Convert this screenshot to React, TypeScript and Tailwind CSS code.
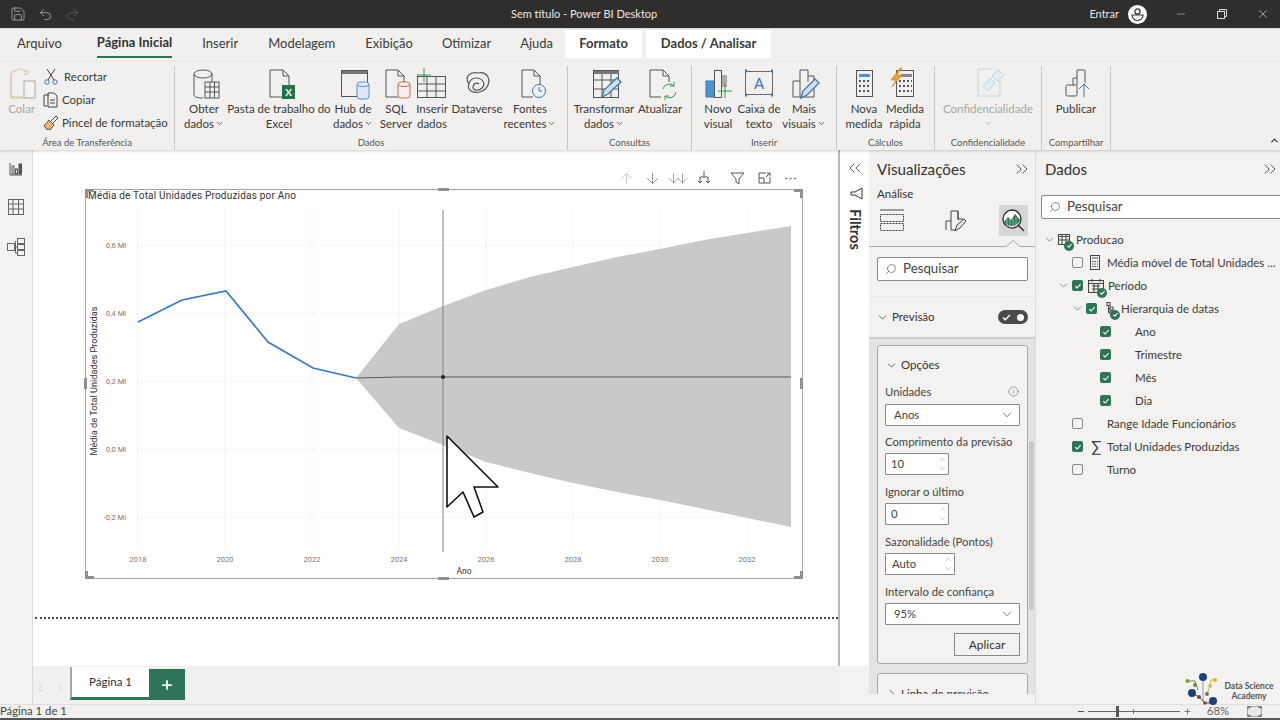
import type { ReactNode } from "react";
import {
  ArrowDown, ArrowUp, ChevronDown, ChevronLeft, ChevronRight, ChevronUp, ChevronsLeft, ChevronsRight,
  Info, Minus, MoreHorizontal, Plus, Redo2, Save, Search, Undo2, X,
} from "lucide-react";

/* ── Ribbon ──────────────────────────────────────────────── */
const Ico = ({ cx, children }: { cx: number; children: ReactNode }) => (
  <svg width={40} height={34} viewBox={`${cx - 20} 66 40 34`} fill="none" stroke="#555" strokeWidth={1} className="shrink-0">
    {children}
  </svg>
);

const RibbonBtn = ({ w, cx, top, bottom, caret, muted, children }: {
  w: number; cx: number; top: string; bottom?: string; caret?: boolean; muted?: boolean; children: ReactNode;
}) => (
  <div className={`flex flex-col items-center shrink-0 leading-[15px] whitespace-nowrap ${muted ? "text-[#a6a5a3]" : "text-[#3b3a39]"}`} style={{ width: w }}>
    <Ico cx={cx}>{children}</Ico>
    <span className="mt-[1px]">{top}</span>
    {(bottom || caret) && (
      <span className="flex items-center gap-[1px] h-[15px]">
        {bottom}
        {caret && <ChevronDown size={9} strokeWidth={2} />}
      </span>
    )}
  </div>
);

const Group = ({ w, label, children }: { w: number; label: string; children: ReactNode }) => (
  <div className="flex flex-col shrink-0 h-[84px] border-r border-[#c8c6c4]" style={{ width: w }}>
    <div className="flex h-[70px]">{children}</div>
    <div className="text-center text-[9.5px] leading-[14px] text-[#555]">{label}</div>
  </div>
);

function Ribbon() {
  return (
    <div className="flex items-start h-[88px] shrink-0 pt-[4px] bg-[#f1f0ee] text-[11.5px] relative z-10 shadow-[0_1px_3px_rgba(0,0,0,0.2)]">
      {/* Área de Transferência */}
      <Group w={175} label="Área de Transferência">
        <div className="flex flex-col items-center w-[43px] text-[#a6a5a3] leading-[15px]">
          <svg width={30} height={34} viewBox="7 66 30 34" fill="none" strokeWidth={1} className="shrink-0">
            <path d="M24 74h4V71h-4l-2-2h-4l-2 2h-4v3h-1v24h12" stroke="#d9c3a2" />
            <path d="M11 74v23h14" stroke="#d9c3a2" />
            <rect x="24" y="81" width="11" height="17" stroke="#a8a8a8" fill="#f4f3f1" />
          </svg>
          <span className="mt-[1px]">Colar</span>
        </div>
        <div className="flex flex-col text-[#3b3a39] leading-[23px] whitespace-nowrap -mt-[1px]">
          <div className="flex items-center gap-[6px] ml-[1px]">
            <svg width={14} height={18} viewBox="0 0 14 18" fill="none" stroke="#444"><path d="M3 1l7 11M11 1L4 12" /><circle cx="3" cy="14" r="2.2" stroke="#3f76b5" /><circle cx="11" cy="14" r="2.2" stroke="#3f76b5" /></svg>
            Recortar
          </div>
          <div className="flex items-center gap-[3px]">
            <svg width={16} height={16} viewBox="0 0 16 16" fill="none" stroke="#444"><path d="M6 3H1v11h3" /><path d="M5 1h6l3 3v11H5z" /><path d="M7 8h5M7 11h5" /></svg>
            Copiar
          </div>
          <div className="flex items-center gap-[2px]">
            <svg width={17} height={17} viewBox="0 0 17 17" fill="none"><path d="M1 12l5-6 5 5-4 5-2-1-1 1-1-2z" fill="#e6b873" stroke="#555" /><path d="M8 7l5-5 2 2-5 5" stroke="#444" /></svg>
            Pincel de formatação
          </div>
        </div>
      </Group>

      {/* Dados */}
      <Group w={393} label="Dados">
        <RibbonBtn w={58} cx={205} top="Obter" bottom="dados" caret>
          <ellipse cx="204" cy="74" rx="9" ry="4" />
          <path d="M195 74v21c0 2 4 3 9 3M213 74v8" />
          <rect x="206" y="82" width="14" height="16" fill="#f1f0ee" />
          <path d="M206 87h14M206 92h14M211 82v16M215.500 82v16" />
        </RibbonBtn>
        <RibbonBtn w={92} cx={280} top="Pasta de trabalho do" bottom="Excel">
          <path d="M290 85V76l-6-6h-13v27h12M284 70v6h6" />
          <rect x="283" y="85" width="13" height="14" fill="#217346" stroke="none" />
          <text x="289.500" y="96" fontSize="10" fontWeight="700" textAnchor="middle" fill="#fff" stroke="none">X</text>
        </RibbonBtn>
        <RibbonBtn w={56} cx={354} top="Hub de" bottom="dados" caret>
          <rect x="342.500" y="70.500" width="26" height="26" />
          <rect x="343" y="71" width="25" height="3" fill="#777" stroke="none" />
          <rect x="358" y="82" width="12" height="17" rx="3" fill="#dfe9f3" stroke="#5a93c9" />
          <path d="M358 85c2 2 10 2 12 0" stroke="#5a93c9" />
        </RibbonBtn>
        <RibbonBtn w={30} cx={397} top="SQL" bottom="Server">
          <path d="M405 82V76l-6-6h-12v27h12M399 70v6h6" />
          <rect x="399" y="82" width="12" height="16" rx="3" fill="#f1f0ee" stroke="#c8714a" />
          <path d="M399 85c2 2 10 2 12 0" stroke="#c8714a" />
        </RibbonBtn>
        <RibbonBtn w={42} cx={433} top="Inserir" bottom="dados">
          <rect x="418.500" y="76.500" width="28" height="21" />
          <path d="M418 84h29M418 91h29M428 77v21M437 77v21" />
          <path d="M425 68v14M418 75h14" stroke="#2f9e4f" />
        </RibbonBtn>
        <RibbonBtn w={48} cx={478} top="Dataverse">
          <path d="M470 84c-5-7 1-13 9-11 8-2 13 5 10 12-3 7-12 9-17 6-5-3-2-13 5-13s10 6 6 10-9 2-9-1 3-5 6-3" strokeWidth={1.2} />
        </RibbonBtn>
        <RibbonBtn w={58} cx={531} top="Fontes" bottom="recentes" caret>
          <path d="M541 84V76l-6-6h-12v27h11M535 70v6h6" />
          <circle cx="540" cy="91" r="6.500" stroke="#3f76b5" fill="#f1f0ee" />
          <path d="M540 87v4h3" stroke="#3f76b5" />
        </RibbonBtn>
      </Group>

      {/* Consultas */}
      <Group w={124} label="Consultas">
        <RibbonBtn w={72} cx={605} top="Transformar" bottom="dados" caret>
          <rect x="594.500" y="70.500" width="25" height="27" />
          <rect x="595" y="71" width="25" height="3" fill="#777" stroke="none" />
          <path d="M594 80h26M594 89h26M603 74v24M612 74v24" />
          <path d="M603 97l2-7 13-12 4 4-13 12z" fill="#cfe0f1" stroke="#3f76b5" strokeWidth={1.3} />
        </RibbonBtn>
        <RibbonBtn w={40} cx={661} top="Atualizar">
          <path d="M670 82V76l-6-6h-13v27h11M664 70v6h6" />
          <path d="M664 89a6.500 6.500 0 0 1 11-3M677 92a6.500 6.500 0 0 1-11 4M675 82v4h-4M666 100v-4h4" stroke="#2f9e4f" />
        </RibbonBtn>
      </Group>

      {/* Inserir */}
      <Group w={145} label="Inserir">
        <RibbonBtn w={52} cx={719} top="Novo" bottom="visual">
          <rect x="707" y="81" width="10" height="16" fill="#4f92d0" stroke="#3f76b5" />
          <rect x="715.500" y="70.500" width="7" height="27" fill="#f1f0ee" />
          <rect x="723" y="75" width="5" height="12" fill="#aaa" stroke="none" />
          <path d="M726 84v14M719 91h14" stroke="#2f9e4f" />
        </RibbonBtn>
        <RibbonBtn w={30} cx={760} top="Caixa de" bottom="texto">
          <rect x="746.500" y="71.500" width="27" height="23" stroke="#6a6a6a" />
          <path d="M746 71h2M772 71h2M746 95h2M772 95h2" stroke="#3f76b5" strokeWidth={3} />
          <text x="760" y="89" fontSize="15" textAnchor="middle" fill="#3f76b5" stroke="none">A</text>
        </RibbonBtn>
        <RibbonBtn w={60} cx={805} top="Mais" bottom="visuais" caret>
          <path d="M794 97V81h7V70h8v6h6v21z" />
          <path d="M801 81v16M809 76v6" />
          <path d="M802 98l2-7 12-12 4 4-12 12z" fill="#cfe0f1" stroke="#3f76b5" strokeWidth={1.3} />
        </RibbonBtn>
      </Group>

      {/* Cálculos */}
      <Group w={98} label="Cálculos">
        <RibbonBtn w={54} cx={865} top="Nova" bottom="medida">
          <rect x="857.500" y="70.500" width="16" height="26" />
          <rect x="860" y="74" width="11" height="3" fill="#4f92d0" stroke="none" />
          <path d="M860 81h11M860 86h11M860 91h11" strokeDasharray="2 2" strokeWidth={2} />
        </RibbonBtn>
        <RibbonBtn w={28} cx={906} top="Medida" bottom="rápida">
          <rect x="897.500" y="70.500" width="17" height="26" />
          <rect x="902" y="74" width="11" height="3" fill="#888" stroke="none" />
          <path d="M900 81h13M900 86h13M900 91h13" strokeDasharray="2 2" strokeWidth={2} />
          <path d="M901 68l-9 12h5l-4 7 10-12h-5l5-7z" fill="#e8a33d" stroke="#b87d24" strokeWidth={0.6} />
        </RibbonBtn>
      </Group>

      {/* Confidencialidade */}
      <Group w={107} label="Confidencialidade">
        <RibbonBtn w={106} cx={988} top="Confidencialidade" caret muted>
          <path d="M1000 81v15h-22V69h14" stroke="#bcd6e6" />
          <path d="M983 86l7-8 5 5-7 8zM992 76l6-6 6 5-6 6z" stroke="#bcd6e6" fill="#e3edf3" />
        </RibbonBtn>
      </Group>

      {/* Compartilhar */}
      <Group w={69} label="Compartilhar">
        <RibbonBtn w={68} cx={1077} top="Publicar">
          <rect x="1067" y="85" width="11" height="11" rx="1.500" />
          <path d="M1074 85v-7h4v-8h7c1 0 1 1 1 1v12M1078 78v7" />
          <path d="M1085 97V84M1080 89l5-5 5 5" stroke="#3f76b5" />
        </RibbonBtn>
      </Group>

      <ChevronUp size={11} strokeWidth={2.5} className="absolute right-[0px] bottom-[4px] text-[#333]" />
    </div>
  );
}

/* ── Chart ───────────────────────────────────────────────── */
const XS = [2018, 2020, 2022, 2024, 2026, 2028, 2030, 2032];
const YS = [["0,6 Mi", 245], ["0,4 Mi", 313], ["0,2 Mi", 381], ["0,0 Mi", 449], ["-0,2 Mi", 517]] as const;

function Chart() {
  return (
    <svg width={722} height={394} viewBox="83 187 722 394" className="block font-['Roboto',sans-serif]">
      <rect x="85.500" y="189.500" width="717" height="389" fill="#fff" stroke="#a3a3a3" />
      <text x="88" y="199" fontSize="10" letterSpacing="0.2" fill="#333">Média de Total Unidades Produzidas por Ano</text>
      {XS.map((y, i) => (
        <g key={y}>
          <line x1={138 + i * 87} x2={138 + i * 87} y1="210" y2="548" stroke="#dcdcdc" strokeDasharray="1 3" />
          <text x={138 + i * 87} y="562" fontSize="7.500" textAnchor="middle" fill="#777">{y}</text>
        </g>
      ))}
      {YS.map(([t, y]) => (
        <g key={t}>
          <line x1="137" x2="792" y1={y} y2={y} stroke="#dcdcdc" strokeDasharray="1 3" />
          <text x="126" y={y + 3} fontSize="7.500" textAnchor="end" fill="#777">{t}</text>
        </g>
      ))}
      <text x="0" y="0" fontSize="9.200" textAnchor="middle" fill="#333" transform="translate(97 381) rotate(-90)">Média de Total Unidades Produzidas</text>
      <text x="464" y="574" fontSize="8.500" textAnchor="middle" fill="#333">Ano</text>

      {/* forecast band */}
      <path
        d="M356 378L399 324L443 306L486 290L530 277L573 267L617 257L660 249L704 240L747 233L791 226V527L747 518L704 509L660 500L617 492L573 483L530 473L486 462L443 445L399 428Z"
        fill="#c9c9c9"
      />
      <path d="M356 378L399 377H791" fill="none" stroke="#3a3a3a" strokeWidth={0.8} />
      <path d="M138 322L182 300L226 291L268 342L313 368L356 378" fill="none" stroke="#3a78c2" strokeWidth={1.7} />
      <line x1="443" x2="443" y1="210" y2="552" stroke="#777" strokeWidth={0.9} />
      <circle cx="443" cy="377" r="2" fill="#222" />

      {/* cursor */}
      <path d="M447 436L498 487H474L483 512L474 517L463 492L447 507Z" fill="#fff" stroke="#111" strokeWidth={1.6} strokeLinejoin="round" />

      {/* selection handles */}
      <g fill="#8f8f8f">
        <path d="M85 189h9v3h-6v6h-3z" />
        <path d="M794 189h9v9h-3v-6h-6z" />
        <path d="M85 571h3v5h6v3h-9z" />
        <path d="M800 571h3v8h-9v-3h6z" />
        <rect x="438" y="188" width="11" height="3" />
        <rect x="438" y="577" width="11" height="3" />
        <rect x="84" y="378" width="3" height="11" />
        <rect x="800" y="378" width="3" height="11" />
      </g>
    </svg>
  );
}

/* ── Data pane tree ──────────────────────────────────────── */
const Check = ({ on }: { on?: boolean }) =>
  on ? (
    <span className="flex items-center justify-center w-[11px] h-[11px] rounded-[2px] bg-[#2e7558] shrink-0">
      <svg width={8} height={8} viewBox="0 0 8 8" fill="none" stroke="#fff" strokeWidth={1.1}><path d="M1.300 4.200l1.800 1.800 3.500-3.800" /></svg>
    </span>
  ) : (
    <span className="w-[11px] h-[11px] rounded-[2px] border border-[#8a8886] bg-[#f4f3f1] shrink-0" />
  );

const Badge = ({ className }: { className: string }) => (
  <span className={`absolute flex items-center justify-center w-[10px] h-[10px] rounded-full bg-[#2e7558] ${className}`}>
    <svg width={7} height={7} viewBox="0 0 8 8" fill="none" stroke="#fff" strokeWidth={1.2}><path d="M1.500 4.200l1.700 1.700 3.300-3.600" /></svg>
  </span>
);

const Caret = () => <ChevronDown size={13} strokeWidth={1} className="text-[#444] shrink-0" />;

const Row = ({ pl, children }: { pl: number; children: ReactNode }) => (
  <div className="flex items-center h-[23px] whitespace-nowrap" style={{ paddingLeft: pl }}>{children}</div>
);

function Tree() {
  return (
    <div className="flex flex-col -ml-[9px] mt-[9px] text-[11.5px] text-[#3b3a39]">
      <Row pl={7}>
        <Caret />
        <span className="relative ml-[2px] w-[12px] h-[12px] shrink-0">
          <svg width={12} height={11} viewBox="0 0 12 11" fill="none" stroke="#444"><rect x=".5" y=".5" width="11" height="10" /><path d="M0 2.500h12M0 6h12M4 0v11M8 0v11" /></svg>
          <Badge className="left-[6px] top-[7px]" />
        </span>
        <span className="ml-[6px]">Producao</span>
      </Row>
      <Row pl={36}>
        <Check />
        <svg width={10} height={15} viewBox="0 0 10 15" fill="none" stroke="#444" className="ml-[7px] shrink-0"><rect x=".5" y=".5" width="9" height="14" /><path d="M2 3h6" /><path d="M2 6.500h6M2 9h6M2 11.500h6" strokeDasharray="1.500 1" /></svg>
        <span className="ml-[7px]">Média móvel de Total Unidades ...</span>
      </Row>
      <Row pl={21}>
        <Caret />
        <span className="ml-[2px]"><Check on /></span>
        <span className="relative ml-[5px] w-[16px] h-[14px] shrink-0">
          <svg width={16} height={14} viewBox="0 0 16 14" fill="none" stroke="#444"><rect x=".5" y="1.500" width="15" height="12" /><path d="M0 4.500h16M4 0v3M12 0v3M4 7h8M4 10h8M6 5v8M10 5v8" /></svg>
          <Badge className="left-[9px] top-[9px]" />
        </span>
        <span className="ml-[4px]">Período</span>
      </Row>
      <Row pl={35}>
        <Caret />
        <span className="ml-[2px]"><Check on /></span>
        <span className="relative ml-[9px] w-[15px] h-[14px] shrink-0">
          <svg width={11} height={12} viewBox="0 0 11 12" fill="none" stroke="#444"><rect x="1" y=".5" width="3" height="3" /><rect x="4" y="5" width="3" height="3" /><rect x="4" y="9" width="3" height="2.500" /><path d="M2.500 3.500V10.500H4M2.500 6.500H4" /></svg>
          <Badge className="left-[4px] top-[8px]" />
        </span>
        <span>Hierarquia de datas</span>
      </Row>
      {["Ano", "Trimestre", "Mês", "Dia"].map((t) => (
        <Row key={t} pl={64}>
          <Check on />
          <span className="ml-[24px]">{t}</span>
        </Row>
      ))}
      <Row pl={36}>
        <Check />
        <span className="ml-[24px]">Range Idade Funcionários</span>
      </Row>
      <Row pl={36}>
        <Check on />
        <span className="ml-[8px] w-[10px] text-center text-[15px] leading-none">∑</span>
        <span className="ml-[6px]">Total Unidades Produzidas</span>
      </Row>
      <Row pl={36}>
        <Check />
        <span className="ml-[24px]">Turno</span>
      </Row>
    </div>
  );
}

/* ── Viz pane fields ─────────────────────────────────────── */
const Label = ({ children }: { children: ReactNode }) => (
  <div className="text-[11.3px] leading-[14px] text-[#444] whitespace-nowrap">{children}</div>
);

const Select = ({ value }: { value: string }) => (
  <div className="flex items-center justify-between h-[22px] mt-[4px] pl-[8px] pr-[5px] bg-white border border-[#8a8886] rounded-[1px] text-[11.3px] text-[#444]">
    {value}
    <ChevronDown size={14} strokeWidth={1.2} />
  </div>
);

const Spin = ({ value, w }: { value: string; w: string }) => (
  <div className={`flex items-center justify-between h-[22px] mt-[4px] pl-[5px] pr-[1px] bg-white border border-[#8a8886] rounded-[1px] text-[11.3px] text-[#444] ${w}`}>
    {value}
    <span className="flex flex-col items-center text-[#777]">
      <ChevronUp size={9} strokeWidth={1} />
      <ChevronDown size={9} strokeWidth={1} />
    </span>
  </div>
);

const SearchBox = ({ className }: { className: string }) => (
  <div className={`flex items-center gap-[6px] h-[24px] pl-[7px] pb-[1px] bg-white border border-[#8a8886] rounded-[2px] text-[13.3px] text-[#444] ${className}`}>
    <Search size={12} strokeWidth={1.2} className="-scale-x-100" />
    Pesquisar
  </div>
);

function VizPane() {
  return (
    <div className="flex flex-col w-[167px] shrink-0 bg-[#f3f2f0] border-r border-[#dcdbd9]">
      <div className="flex items-center justify-between h-[22px] mt-[8px] pl-[8px] pr-[3px]">
        <span className="text-[15.2px] text-[#333]">Visualizações</span>
        <ChevronsRight size={20} strokeWidth={1} className="text-[#333]" />
      </div>
      <div className="pl-[8px] mt-[5px] h-[18px] leading-[18px] text-[11.5px] text-[#333]">Análise</div>
      <div className="flex items-center justify-between pl-[10px] pr-[7px] h-[31px] mt-[2px]">
        <svg width={26} height={26} viewBox="0 0 26 26" fill="none" stroke="#444">
          <path d="M1 2h24" />
          <rect x="1.500" y="6.500" width="23" height="7" strokeDasharray="2 1" />
          <rect x="1.500" y="15.500" width="23" height="7" strokeDasharray="2 1" />
        </svg>
        <svg width={24} height={26} viewBox="0 0 24 26" fill="none" stroke="#444" className="ml-[8px]">
          <path d="M2 22V13h5V3h7v8h5" />
          <path d="M7 13v9h5M14 3v9" />
          <path d="M11 23l2-6 7-6 2 2-6 7z" fill="#e6e5e3" />
        </svg>
        <span className="flex items-center justify-center w-[29px] h-[31px] bg-[#d7d6d4]">
          <svg width={25} height={25} viewBox="0 0 25 25" fill="none">
            <circle cx="11" cy="11" r="9" fill="#fff" stroke="#333" strokeWidth={1.4} />
            <path d="M3 14l4-5 3 3 4-6 5 6a9 9 0 0 1-16 2z" fill="#2e7558" />
            <path d="M6 11v8M9 11v9M12 10v10M15 9v10" stroke="#fff" strokeWidth={0.5} />
            <path d="M17 17l6 6" stroke="#333" strokeWidth={1.6} />
          </svg>
        </span>
      </div>
      {/* tab rule with the notch under the active icon */}
      <svg height={7} width={166} viewBox="0 0 166 7" fill="none" stroke="#aaa" className="shrink-0 mt-[4px]">
        <path d="M0 6.500H137L144 .5L151 6.500H166" />
      </svg>
      <SearchBox className="mx-[8px] mt-[10px] w-[151px] shrink-0" />
      <div className="flex items-center justify-between h-[41px] shrink-0 mt-[15px] pl-[7px] pr-[7px] border-t border-[#e8e7e5]">
        <span className="flex items-center gap-[3px] text-[11.5px] text-[#333]">
          <ChevronDown size={13} strokeWidth={1.3} />
          Previsão
        </span>
        <span className="flex items-center justify-between w-[30px] h-[14px] px-[4px] rounded-full bg-[#4a4a48]">
          <svg width={9} height={7} viewBox="0 0 9 7" fill="none" stroke="#fff" strokeWidth={1.4}><path d="M1 3.500l2.200 2.200L8 1" /></svg>
          <span className="w-[7px] h-[7px] rounded-full bg-white" />
        </span>
      </div>
      {/* scrolling area */}
      <div className="relative h-[357px] shrink-0 overflow-hidden bg-[#e4e3e1] border-t-2 border-[#cfcecc] pl-[8px] pt-[6px]">
        <div className="flex flex-col w-[151px] h-[319px] bg-[#f3f2f0] border border-[#a9a8a6] rounded-[3px] px-[7px]">
          <div className="flex items-center gap-[3px] mt-[12px] text-[11.5px] text-[#333] h-[14px]">
            <ChevronDown size={13} strokeWidth={1.3} />
            Opções
          </div>
          <div className="flex items-center justify-between mt-[12px] h-[15px]">
            <Label>Unidades</Label>
            <Info size={11} strokeWidth={1} className="text-[#444] mr-[1px]" />
          </div>
          <div className="h-[1px]" />
          <Select value="Anos" />
          <div className="mt-[9px]"><Label>Comprimento da previsão</Label></div>
          <Spin value="10" w="w-[64px]" />
          <div className="mt-[10px]"><Label>Ignorar o último</Label></div>
          <Spin value="0" w="w-[64px]" />
          <div className="mt-[10px]"><Label>Sazonalidade (Pontos)</Label></div>
          <Spin value="Auto" w="w-[70px] pl-[6px]" />
          <div className="mt-[10px]"><Label>Intervalo de confiança</Label></div>
          <Select value="95%" />
          <div className="flex justify-end mt-[8px]">
            <span className="flex items-center justify-center w-[66px] h-[23px] bg-[#f3f2f0] border border-[#8a8886] text-[12px] text-[#333]">Aplicar</span>
          </div>
        </div>
        <div className="w-[151px] h-[40px] mt-[9px] bg-[#f3f2f0] border border-[#a9a8a6] rounded-[3px] pl-[7px] pt-[11px]">
          <span className="flex items-center gap-[3px] text-[11.5px] text-[#333]">
            <ChevronRight size={13} strokeWidth={1.3} />
            Linha de previsão
          </span>
        </div>
        <span className="absolute right-[1px] top-[102px] w-[5px] h-[169px] rounded-full bg-[#c9c8c6]" />
      </div>
    </div>
  );
}

/* ── Page ────────────────────────────────────────────────── */
const TAB = "flex items-center h-[28px] mb-[4px]";
const TOOL = "flex items-center justify-center w-[26px] shrink-0";

export default function App() {
  return (
    <div className="relative flex flex-col w-[1280px] h-[720px] overflow-hidden bg-[#f3f2f0] font-['Lato',sans-serif] text-[#333]">
      {/* title bar */}
      <div className="relative flex items-center h-[28px] shrink-0 bg-[#2f2e2c] text-white">
        <div className="flex items-center gap-[12px] pl-[10px]">
          <Save size={16} strokeWidth={1} className="text-[#cfcfcf]" />
          <Undo2 size={15} strokeWidth={1} className="text-[#cfcfcf]" />
          <Redo2 size={15} strokeWidth={1} className="text-[#6e6d6b]" />
        </div>
        <span className="absolute left-[511px] text-[11px] text-[#e8e8e8]">Sem título - Power BI Desktop</span>
        <div className="flex items-center ml-auto pr-[10px]">
          <span className="text-[11px] text-[#e8e8e8]">Entrar</span>
          <svg width={19} height={19} viewBox="0 0 19 19" className="ml-[9px]">
            <circle cx="9.500" cy="9.500" r="9.500" fill="#fff" />
            <circle cx="9.500" cy="6.500" r="2.600" fill="none" stroke="#2f2e2c" strokeWidth={1.2} />
            <path d="M4 10h11a5.500 5.500 0 0 1-11 0z" fill="none" stroke="#2f2e2c" strokeWidth={1.2} />
          </svg>
          <Minus size={12} strokeWidth={1} className="ml-[28px] text-[#ddd]" />
          <svg width={10} height={10} viewBox="0 0 10 10" fill="none" stroke="#ddd" className="ml-[30px]"><rect x=".5" y="2.500" width="7" height="7" /><path d="M2.500 2.500V.5h7v7H7.500" /></svg>
          <X size={14} strokeWidth={1} className="ml-[29px] text-[#eee]" />
        </div>
      </div>

      {/* tabs */}
      <div className="flex items-end h-[34px] shrink-0 bg-[#f1f0ee] border-t border-[#d8d7d5] text-[13px] text-[#3b3a39] whitespace-nowrap">
        <span className={`${TAB} ml-[17px]`}>Arquivo</span>
        <span className={`${TAB} ml-[35px] font-bold border-b-2 border-[#2e7558] text-[#333]`}>Página Inicial</span>
        <span className={`${TAB} ml-[30px]`}>Inserir</span>
        <span className={`${TAB} ml-[30px]`}>Modelagem</span>
        <span className={`${TAB} ml-[30px]`}>Exibição</span>
        <span className={`${TAB} ml-[29px]`}>Otimizar</span>
        <span className={`${TAB} ml-[29px]`}>Ajuda</span>
        <span className={`${TAB} justify-center w-[77px] ml-[12px] bg-white font-bold`}>Formato</span>
        <span className={`${TAB} justify-center w-[125px] ml-[4px] bg-white font-bold`}>Dados / Analisar</span>
      </div>

      <Ribbon />

      {/* body */}
      <div className="flex flex-1 min-h-0">
        {/* left rail */}
        <div className="flex flex-col items-center w-[33px] shrink-0 border-r border-[#dcdbd9] pt-[12px] gap-[23px] text-[#555]">
          <svg width={14} height={14} viewBox="0 0 14 14" fill="none" stroke="#555"><path d="M1 1v12h12" /><rect x="3" y="4" width="2" height="8" /><rect x="6.500" y="7" width="2" height="5" /><rect x="10" y="2" width="2.500" height="10" fill="#555" /></svg>
          <svg width={16} height={16} viewBox="0 0 16 16" fill="none" stroke="#666"><rect x=".5" y=".5" width="15" height="15" /><path d="M0 5h16M0 10h16M5 0v16M10.500 0v16" /></svg>
          <svg width={18} height={18} viewBox="0 0 18 18" fill="none" stroke="#666"><rect x=".5" y="5.500" width="7" height="7" /><rect x="10.500" y=".5" width="7" height="5" /><rect x="10.500" y="6.500" width="7" height="5" /><rect x="10.500" y="12.500" width="7" height="5" /><path d="M7 9h3M8.500 3v12h2" /></svg>
        </div>

        {/* canvas + page tabs */}
        <div className="flex flex-col w-[805px] shrink-0">
          <div className="flex flex-col h-[516px] bg-white">
            <div className="flex items-center justify-end h-[37px] pt-[19px] pr-[35px] text-[#666]">
              <span className={TOOL}><ArrowUp size={17} strokeWidth={1} className="text-[#bbb]" /></span>
              <span className={TOOL}><ArrowDown size={17} strokeWidth={1} /></span>
              <span className={`${TOOL} -space-x-[6px]`}><ArrowDown size={15} strokeWidth={1} /><ArrowDown size={15} strokeWidth={1} /></span>
              <span className={TOOL}><svg width={14} height={14} viewBox="0 0 14 14" fill="none" stroke="#555"><path d="M7 0v6M3 12V6h8v6M1 10l2 2 2-2M9 10l2 2 2-2" /></svg></span>
              <span className={`${TOOL} ml-[7px]`}><svg width={15} height={13} viewBox="0 0 15 13" fill="none" stroke="#555"><path d="M1 1h13L9 7v5L6 10V7z" /></svg></span>
              <span className={`${TOOL} ml-[1px]`}><svg width={13} height={12} viewBox="0 0 13 12" fill="none" stroke="#555"><path d="M8 1H1v10h11V5M1 6h5v5M8 5l4-4M9 1h3v3" /></svg></span>
              <span className={TOOL}><MoreHorizontal size={15} strokeWidth={1.2} /></span>
            </div>
            <div className="ml-[50px]"><Chart /></div>
            <div className="mt-[36px] ml-[2px] border-t-2 border-dotted border-[#444]" />
          </div>
          <div className="flex items-end h-[38px] shrink-0 bg-[#f1f0ee]">
            <ChevronLeft size={11} strokeWidth={2} className="ml-[2px] mb-[10px] text-[#c4c4c4]" />
            <ChevronRight size={11} strokeWidth={2} className="ml-[9px] mb-[10px] text-[#c4c4c4]" />
            <span className="flex items-center justify-center w-[79px] h-[33px] ml-[4px] mb-[4px] bg-white border-l-2 border-[#a5a5a5] border-b-[3px] border-b-[#2e7558] text-[11.5px] text-[#333]">Página 1</span>
            <span className="flex items-center justify-center w-[36px] h-[31px] mb-[4px] bg-[#2e7558]">
              <Plus size={14} strokeWidth={3} className="text-white" />
            </span>
          </div>
        </div>

        {/* filters strip */}
        <div className="flex flex-col items-center w-[31px] shrink-0 h-[516px] bg-white border-l-2 border-[#b9b8b6]">
          <ChevronsLeft size={20} strokeWidth={1} className="mt-[8px] text-[#333]" />
          <svg width={13} height={13} viewBox="0 0 13 13" fill="none" stroke="#333" className="mt-[9px] ml-[3px]"><path d="M12 1v11L5 8H1V5h4z" /></svg>
          <span className="mt-[9px] [writing-mode:vertical-rl] text-[14.5px] leading-none font-bold text-[#333]">Filtros</span>
        </div>

        <VizPane />

        {/* data pane */}
        <div className="flex flex-col flex-1 min-w-0 pl-[9px] overflow-hidden">
          <div className="flex items-center justify-between h-[22px] mt-[8px]">
            <span className="text-[15px] text-[#333]">Dados</span>
            <ChevronsRight size={20} strokeWidth={1} className="text-[#333]" />
          </div>
          <SearchBox className="-ml-[4px] mt-[15px] w-[244px] shrink-0" />
          <Tree />
        </div>
      </div>

      {/* status bar */}
      <div className="relative flex items-center h-[16px] shrink-0 bg-[#f1f0ee] border-t border-[#e0dfdd] border-b-2 border-b-[#555] text-[11.3px] text-[#444]">
        <span>Página 1 de 1</span>
        <div className="flex items-center ml-auto text-[#666]">
          <span className="w-[6px] h-[1px] bg-[#555]" />
          <div className="relative w-[92px] h-[1px] ml-[4px] bg-[#666]">
            <span className="absolute left-[28px] -top-[5px] w-[3px] h-[11px] bg-[#555]" />
            <span className="absolute left-[45px] -top-[2px] w-[1px] h-[5px] bg-[#777]" />
          </div>
          <Plus size={9} strokeWidth={1.5} className="ml-[3px] text-[#333]" />
          <span className="ml-[15px] text-[#666]">68%</span>
          <svg width={15} height={11} viewBox="0 0 15 11" fill="none" stroke="#555" className="ml-[18px] mr-[18px]">
            <rect x=".5" y=".5" width="14" height="10" fill="#e9e8e6" stroke="#aaa" />
            <path d="M1 3V1h3M11 1h3v2M14 8v2h-3M4 10H1V8" />
          </svg>
        </div>
      </div>

      {/* logo watermark */}
      <div className="absolute left-[1185px] top-[672px] flex items-center">
        <svg width={36} height={38} viewBox="0 0 36 38" fill="none" strokeWidth={1}>
          <path d="M18 5v25" stroke="#7f9cc2" />
          <path d="M2 9h8l3 9" stroke="#6d8f3a" />
          <path d="M25 14l1-6h4M22 22l3-8" stroke="#c9b93a" />
          <path d="M7 21l7 4 6 6h8" stroke="#7a4a35" />
          <circle cx="2.500" cy="9" r="2" fill="#7d9b3c" />
          <circle cx="10" cy="13" r="2" fill="#6d8f3a" />
          <circle cx="18" cy="5" r="4" fill="#1f3f78" />
          <circle cx="7" cy="21" r="4" fill="#1f3f78" />
          <circle cx="30" cy="8" r="2" fill="#c9b93a" />
          <circle cx="25" cy="14" r="1.800" fill="#c9b93a" />
          <circle cx="14" cy="25" r="2" fill="#7a4a35" />
          <circle cx="22" cy="22" r="2" fill="#6b7a2a" />
          <circle cx="28" cy="29" r="4" fill="#1f3f78" />
          <circle cx="20" cy="31" r="1.800" fill="#7a4a35" />
        </svg>
        <span className="w-[54px] ml-[1px] -mt-[1px] text-center text-[8.5px] leading-[10px] font-bold text-[#555] whitespace-nowrap">Data Science<br />Academy</span>
      </div>
    </div>
  );
}
